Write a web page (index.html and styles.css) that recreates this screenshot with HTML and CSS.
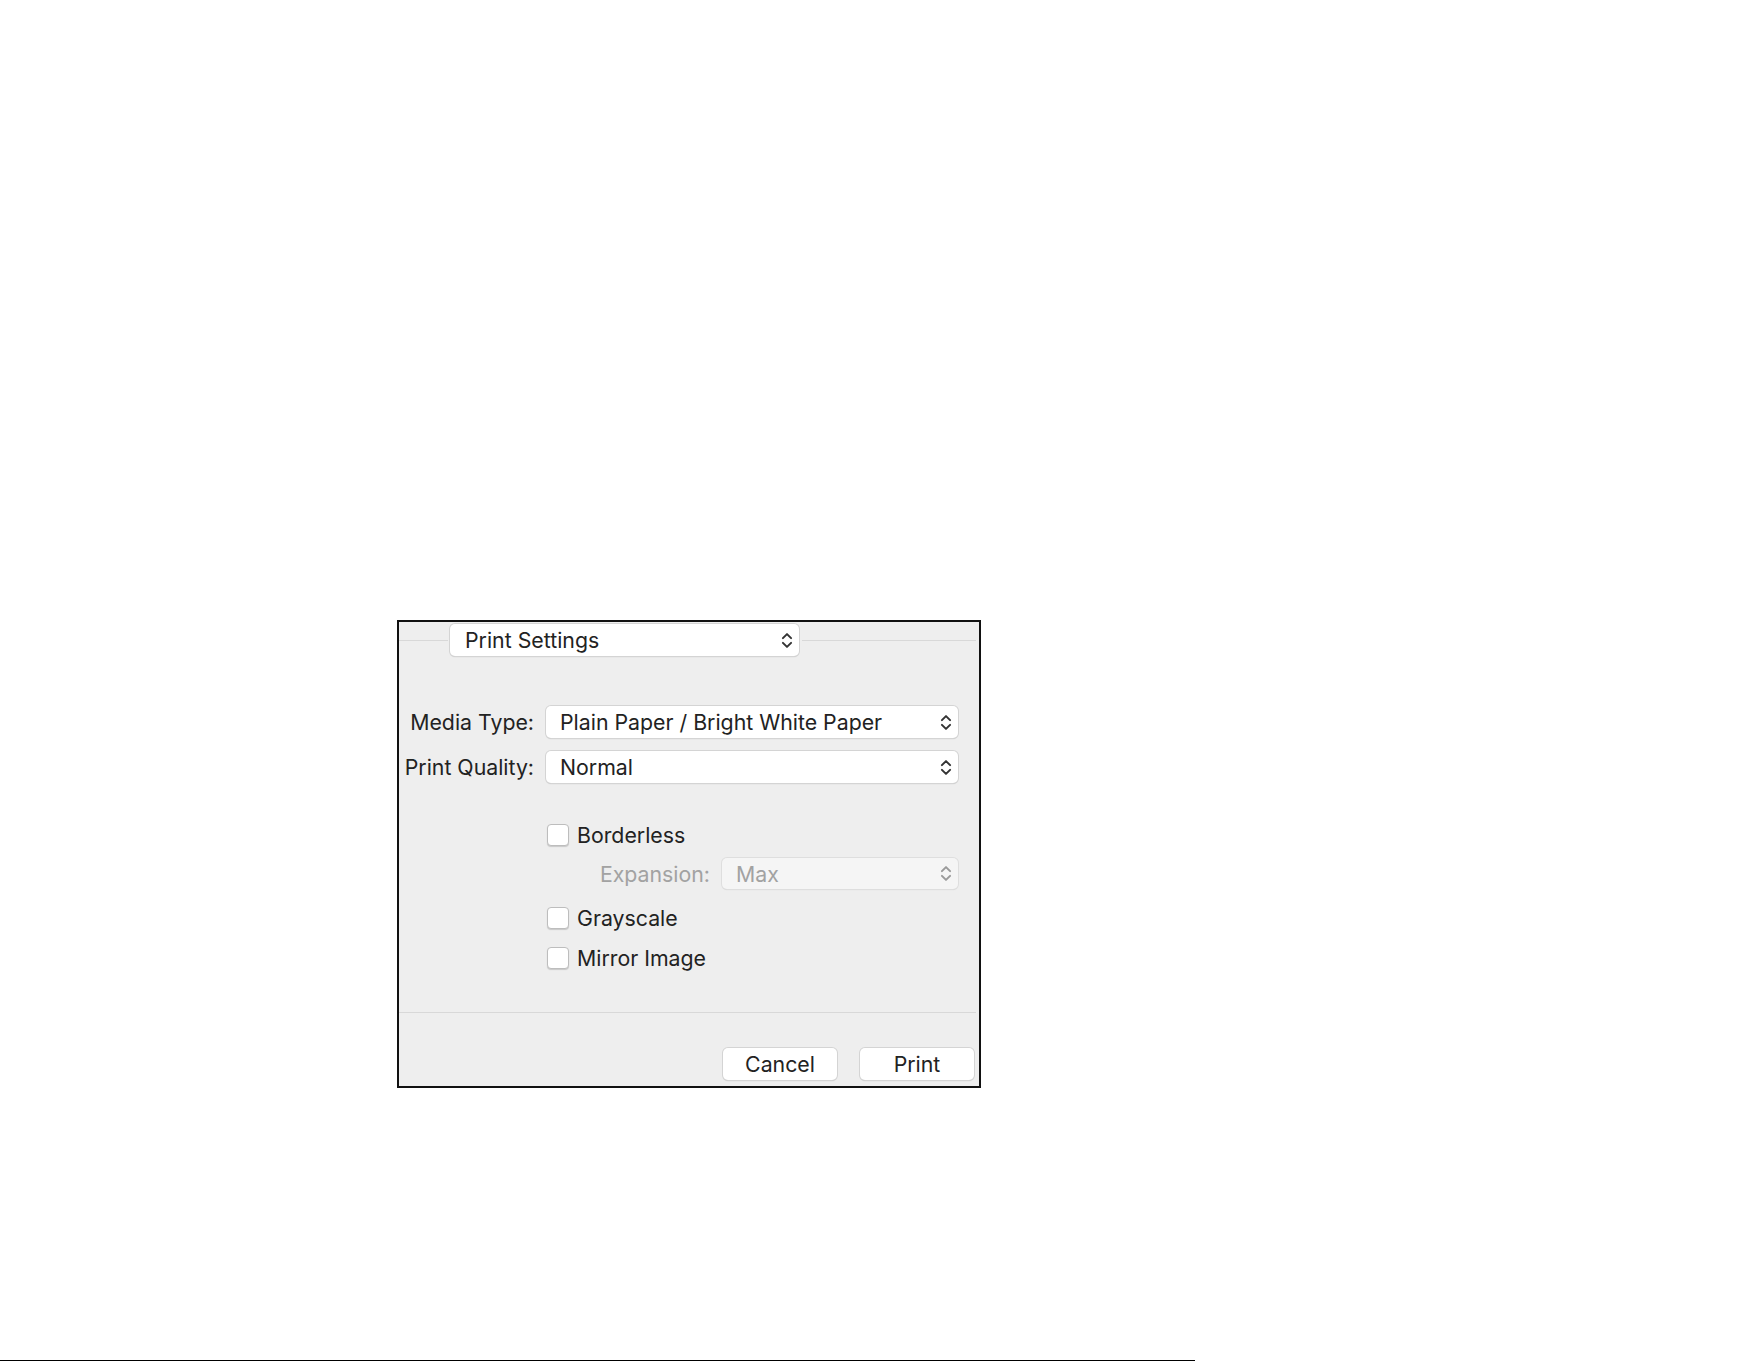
FILE: index.html
```html
<!DOCTYPE html>
<html lang="en">
<head>
  <meta charset="UTF-8">
  <title>Print Settings</title>
  <link rel="stylesheet" href="styles.css">
</head>
<body>
  <div class="page">
    <div class="sheet">

      <div class="sheet-head">
        <span class="rule rule-short"></span>
        <div class="popup popup-pane">
          <span>Print Settings</span>
          <svg class="updown" viewBox="0 0 12 18"><path d="M2.5 7 L6 3.5 L9.5 7 M2.5 11 L6 14.5 L9.5 11"/></svg>
        </div>
        <span class="rule"></span>
      </div>

      <div class="form">
        <span class="field-label">Media Type:</span>
        <div class="popup">
          <span>Plain Paper / Bright White Paper</span>
          <svg class="updown" viewBox="0 0 12 18"><path d="M2.5 7 L6 3.5 L9.5 7 M2.5 11 L6 14.5 L9.5 11"/></svg>
        </div>
        <span class="field-label">Print Quality:</span>
        <div class="popup">
          <span>Normal</span>
          <svg class="updown" viewBox="0 0 12 18"><path d="M2.5 7 L6 3.5 L9.5 7 M2.5 11 L6 14.5 L9.5 11"/></svg>
        </div>
      </div>

      <div class="options">
        <div class="check-row"><span class="checkbox"></span>Borderless</div>
        <div class="sub-row">
          <span class="sub-label">Expansion:</span>
          <div class="popup disabled">
            <span>Max</span>
            <svg class="updown" viewBox="0 0 12 18"><path d="M2.5 7 L6 3.5 L9.5 7 M2.5 11 L6 14.5 L9.5 11"/></svg>
          </div>
        </div>
        <div class="check-row grayscale"><span class="checkbox"></span>Grayscale</div>
        <div class="check-row mirror"><span class="checkbox"></span>Mirror Image</div>
      </div>

      <div class="sheet-foot">
        <div class="rule foot-rule"></div>
        <div class="buttons">
          <button>Cancel</button>
          <button>Print</button>
        </div>
      </div>

    </div>
    <div class="page-rule"></div>
  </div>
</body>
</html>
```

FILE: styles.css
```css
body {
  margin: 0;
  background: #ffffff;
  font-family: Inter, "Liberation Sans", sans-serif;
  color: #222222;
}

.page {
  padding-top: 620px;
}

.sheet {
  margin-left: 397px;
  width: 580px;
  height: 464px;
  border: 2px solid #111111;
  background: #eeeeee;
  display: flex;
  flex-direction: column;
}

/* pane selector with a rule running through it */
.sheet-head {
  display: flex;
  align-items: center;
  margin-top: 2px;
}

.rule {
  height: 1px;
  background: #d8d8d8;
  flex: 1;
  margin-right: 3px;
}

.rule-short {
  flex: 0 0 49px;
  margin-right: 2px;
}

.popup {
  height: 32px;
  box-sizing: border-box;
  background: #ffffff;
  border-radius: 5px;
  box-shadow: 0 0 0 1px #d4d4d4, 0 1px 1px #b8b8b8;
  display: flex;
  align-items: center;
  justify-content: space-between;
  padding: 0 5px 0 14px;
  font-size: 21.3px;
}

.popup-pane {
  width: 349px;
  margin-right: 3px;
  padding-left: 15px;
}

.updown {
  width: 14px;
  height: 21px;
  fill: none;
  stroke: #333333;
  stroke-width: 1.7;
  stroke-linecap: round;
  stroke-linejoin: round;
}

.form {
  display: grid;
  grid-template-columns: 135px 412px;
  column-gap: 12px;
  row-gap: 13px;
  align-items: center;
  margin-top: 50px;
}

.field-label {
  text-align: right;
  font-size: 21.3px;
}

.options {
  margin-top: 41px;
  padding-left: 148px;
}

.check-row {
  display: flex;
  align-items: center;
  gap: 8px;
  height: 22px;
  font-size: 21.3px;
}

.checkbox {
  width: 22px;
  height: 22px;
  box-sizing: border-box;
  background: #ffffff;
  border: 1px solid #bdbdbd;
  border-radius: 4px;
  box-shadow: 0 1px 1px #c8c8c8;
}

.sub-row {
  width: 411px;
  display: flex;
  justify-content: flex-end;
  align-items: center;
  gap: 12px;
  margin-top: 12px;
}

.sub-label {
  font-size: 21.3px;
  color: #a2a2a2;
}

.popup.disabled {
  width: 236px;
  height: 31px;
  background: #f5f5f5;
  color: #a2a2a2;
  box-shadow: 0 0 0 1px #dedede, 0 1px 1px #d0d0d0;
}

.popup.disabled .updown {
  stroke: #9a9a9a;
}

.grayscale {
  margin-top: 18px;
}

.mirror {
  margin-top: 18px;
}

.sheet-foot {
  margin-top: auto;
}

.foot-rule {
  flex: none;
}

.buttons {
  display: flex;
  justify-content: flex-end;
  gap: 23px;
  margin: 35px 5px 6px 0;
}

button {
  width: 114px;
  height: 32px;
  background: #ffffff;
  border: none;
  border-radius: 5px;
  box-shadow: 0 0 0 1px #d4d4d4, 0 1px 1px #b8b8b8;
  font-family: Inter, "Liberation Sans", sans-serif;
  font-size: 21.3px;
  color: #222222;
  padding: 0;
}

.page-rule {
  width: 1195px;
  height: 1px;
  margin-top: 272px;
  background: #000000;
}
```
